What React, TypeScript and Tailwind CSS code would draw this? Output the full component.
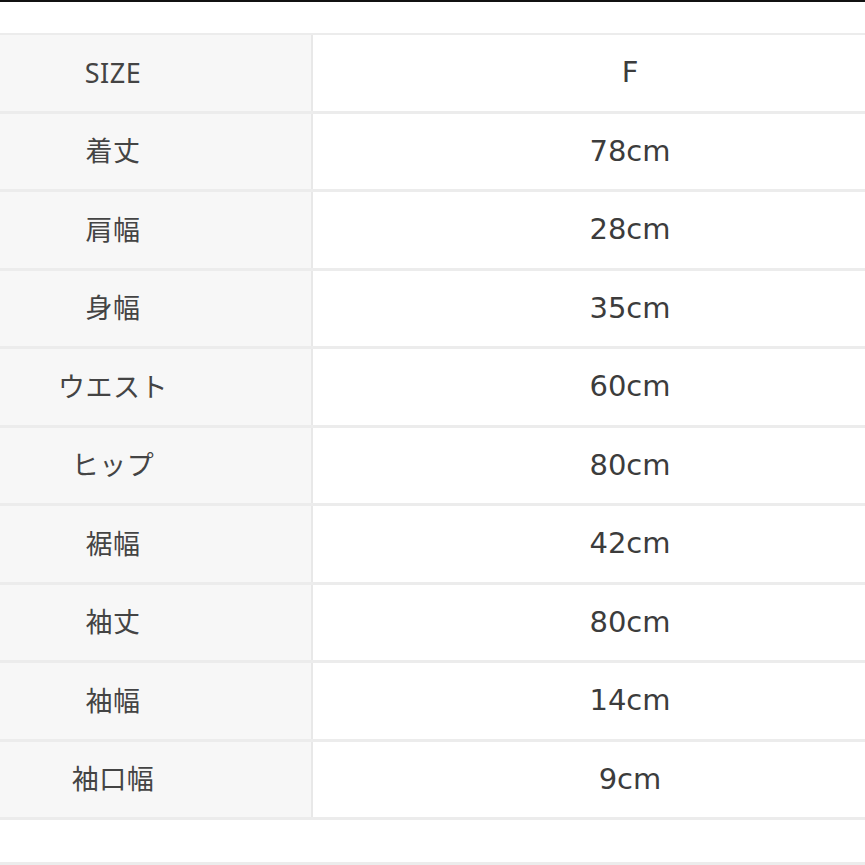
const rows: [string, string][] = [
  ["SIZE", "F"],
  ["着丈", "78cm"],
  ["肩幅", "28cm"],
  ["身幅", "35cm"],
  ["ウエスト", "60cm"],
  ["ヒップ", "80cm"],
  ["裾幅", "42cm"],
  ["袖丈", "80cm"],
  ["袖幅", "14cm"],
  ["袖口幅", "9cm"],
];

export default function App() {
  return (
    <div
      className="h-[865px] w-[865px] overflow-hidden bg-white text-[#444] flex flex-col"
      style={{ fontFamily: '"Noto Sans", "Noto Sans CJK JP", sans-serif' }}
    >
      <div className="h-[2px] bg-[#111]" />
      <div className="h-[31px]" />
      {/* size table, wider than the viewport */}
      <div className="ml-[-85px] w-[1032px] border-t-2 border-[#ececec]">
        {rows.map(([label, value]) => (
          <div key={label} className="flex h-[78.5px] border-b-[3px] border-[#ececec]">
            <div className="w-[398px] shrink-0 flex items-center justify-center bg-[#f7f7f7] border-r-2 border-[#e8e8e8] text-[27px] tracking-[0.02em]">
              {label}
            </div>
            <div className="flex-1 flex items-center justify-center text-[29px] font-['DejaVu_Sans',sans-serif] text-[#3c3c3c]">
              {value}
            </div>
          </div>
        ))}
      </div>
      <div className="flex-1" />
      <div className="h-[3px] bg-[#ececec]" />
    </div>
  );
}
